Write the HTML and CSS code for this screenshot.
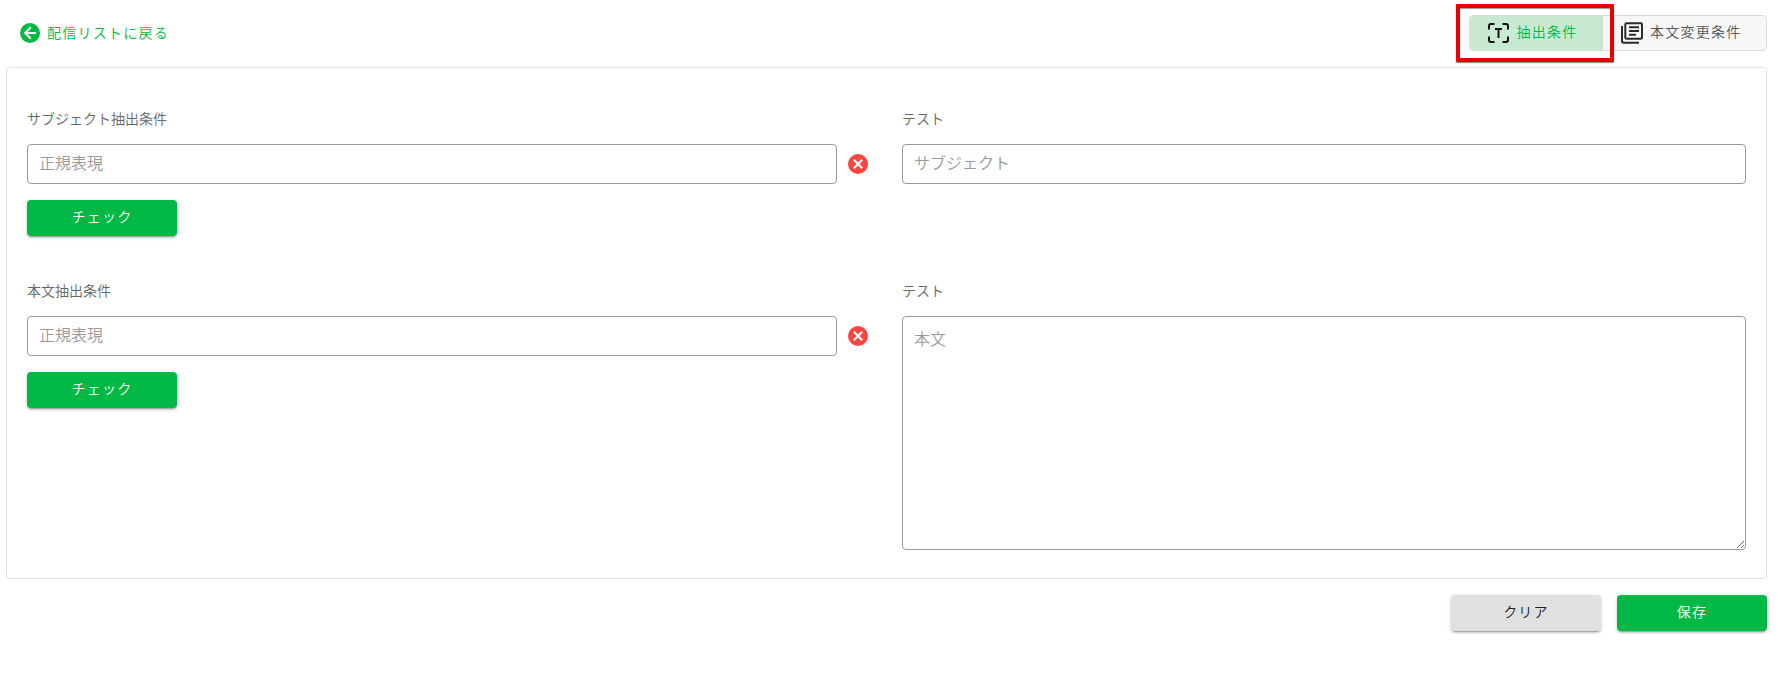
FILE: index.html
```html
<!DOCTYPE html>
<html lang="ja">
<head>
<meta charset="utf-8">
<title>抽出条件</title>
<link rel="stylesheet" href="styles.css">
</head>
<body>
<header class="topbar">
  <a class="back">
    <svg class="icon-back" viewBox="0 0 20 20"><circle cx="10" cy="10" r="10" fill="#00b843"/><path d="M16 10H5.500M10.800 4.300L5.100 10l5.700 5.700" fill="none" stroke="#fff" stroke-width="2"/></svg>
    <span>配信リストに戻る</span>
  </a>
  <nav class="toggle">
    <button class="tab tab-active">
      <svg class="icon-scan" viewBox="0 0 21 20"><path d="M1 6.500V3q0-2 2-2h3.500M14.500 1H18q2 0 2 2v3.500M20 13.500V17q0 2-2 2h-3.500M6.500 19H3q-2 0-2-2v-3.500M7 6h7M10.500 6v9" fill="none" stroke="#111" stroke-width="2"/></svg>
      <span>抽出条件</span>
      <i class="highlight"></i>
    </button>
    <button class="tab">
      <svg class="icon-library" viewBox="0 0 24 24"><path d="M6.500 2.200h14.300q1.200 0 1.200 1.200v13.200q0 1.200-1.200 1.200H6.500q-1.200 0-1.200-1.200V3.400q0-1.200 1.200-1.200zM2 5v15q0 1.800 1.800 1.800H19M9 6.200h10M9 10h10M9 13.800h7" fill="none" stroke="#2b2b2b" stroke-width="2"/></svg>
      <span>本文変更条件</span>
    </button>
  </nav>
</header>
<main class="card">
  <section class="row row-subject">
    <div class="field">
      <label class="label">サブジェクト抽出条件</label>
      <div class="input-line">
        <input class="input" placeholder="正規表現">
        <svg class="icon-clear" viewBox="0 0 20 20"><circle cx="10" cy="10" r="10" fill="#ff4540"/><path d="M5.800 5.800l8.400 8.400M14.200 5.800l-8.400 8.400" stroke="#fff" stroke-width="2.200"/></svg>
      </div>
      <button class="btn btn-green">チェック</button>
    </div>
    <div class="field">
      <label class="label">テスト</label>
      <input class="input" placeholder="サブジェクト">
    </div>
  </section>
  <section class="row">
    <div class="field">
      <label class="label">本文抽出条件</label>
      <div class="input-line">
        <input class="input" placeholder="正規表現">
        <svg class="icon-clear" viewBox="0 0 20 20"><circle cx="10" cy="10" r="10" fill="#ff4540"/><path d="M5.800 5.800l8.400 8.400M14.200 5.800l-8.400 8.400" stroke="#fff" stroke-width="2.200"/></svg>
      </div>
      <button class="btn btn-green">チェック</button>
    </div>
    <div class="field">
      <label class="label">テスト</label>
      <textarea class="input textarea" placeholder="本文"></textarea>
    </div>
  </section>
</main>
<footer class="actions">
  <button class="btn btn-grey">クリア</button>
  <button class="btn btn-green">保存</button>
</footer>
</body>
</html>
```
FILE: styles.css
```css
* { box-sizing: border-box; }
body {
  margin: 0;
  min-height: 100vh;
  padding: 15px 11px 0 6px;
  background: #fff;
  font-family: "Noto Sans CJK JP", sans-serif;
  font-weight: 350;
  font-size: 14px;
}
button, input, textarea { font: inherit; margin: 0; }
svg { display: block; flex: none; }

.topbar {
  display: flex;
  justify-content: space-between;
  height: 36px;
  margin-bottom: 16px;
}
.back {
  display: flex;
  align-items: center;
  gap: 7px;
  height: 36px;
  padding-left: 14px;
  color: #00b843;
  letter-spacing: 1.25px;
  line-height: 20px;
}
.icon-back { width: 20px; height: 20px; }
.back span { margin-top: -3px; }

.toggle {
  display: flex;
  width: 298px;
  border: 1px solid #dcdcdc;
  border-radius: 4px;
  background: #f7f7f7;
}
.tab {
  position: relative;
  display: flex;
  align-items: center;
  gap: 6px;
  padding: 0 0 0 17px;
  border: 0;
  background: none;
  color: #555;
  letter-spacing: 1.25px;
  line-height: 20px;
}
.tab span { margin-top: -4px; }
.tab-active {
  gap: 7.5px;
  width: 133px;
  padding-left: 18px;
  border-right: 1px solid #d3d8d4;
  border-radius: 3px 0 0 3px;
  background: #c8ead3;
  color: #00b843;
}
.icon-scan { width: 21px; height: 20px; }
.icon-library { width: 24px; height: 24px; }
.highlight {
  position: absolute;
  left: -14px;
  top: -12px;
  width: 158px;
  height: 58px;
  border: 4px solid #e60000;
  border-radius: 1px;
  box-shadow: 0 1px 1px rgba(0, 0, 0, .5), inset 0 1px 1px rgba(0, 0, 0, .4);
}

.card {
  height: 512px;
  padding: 40px 20px 0;
  border: 1px solid #e0e0e0;
  border-radius: 4px;
}
.row {
  display: grid;
  grid-template-columns: 842px 844px;
  gap: 33px;
}
.row-subject { height: 172px; }
.field { display: flex; flex-direction: column; align-items: flex-start; }
.label {
  height: 20px;
  margin-bottom: 16px;
  color: #666;
  line-height: 20px;
}
.input-line { display: flex; align-items: center; gap: 11px; width: 100%; margin-bottom: 16px; }
.input {
  width: 100%;
  height: 40px;
  padding: 0 11px 5px;
  border: 1px solid #999;
  border-radius: 4px;
  outline: 0;
  background: #fff;
  font-size: 16px;
}
.input-line .input { width: 810px; }
.input::placeholder { color: #999; opacity: 1; }
.textarea { display: block; height: 234px; padding: 7px 11px; line-height: 28px; resize: vertical; }
.icon-clear { width: 20px; height: 20px; }

.btn {
  width: 150px;
  height: 36px;
  padding: 0 0 4px;
  border: 0;
  border-radius: 4px;
  letter-spacing: 1.25px;
  line-height: 20px;
  box-shadow: 0 3px 1px -2px rgba(0, 0, 0, .2), 0 2px 2px rgba(0, 0, 0, .14), 0 1px 5px rgba(0, 0, 0, .12);
}
.btn-green { background: #00b843; color: #fff; }
.btn-grey { background: #e0e0e0; color: #222; }
.actions { display: flex; justify-content: flex-end; gap: 16px; margin-top: 16px; }
```
